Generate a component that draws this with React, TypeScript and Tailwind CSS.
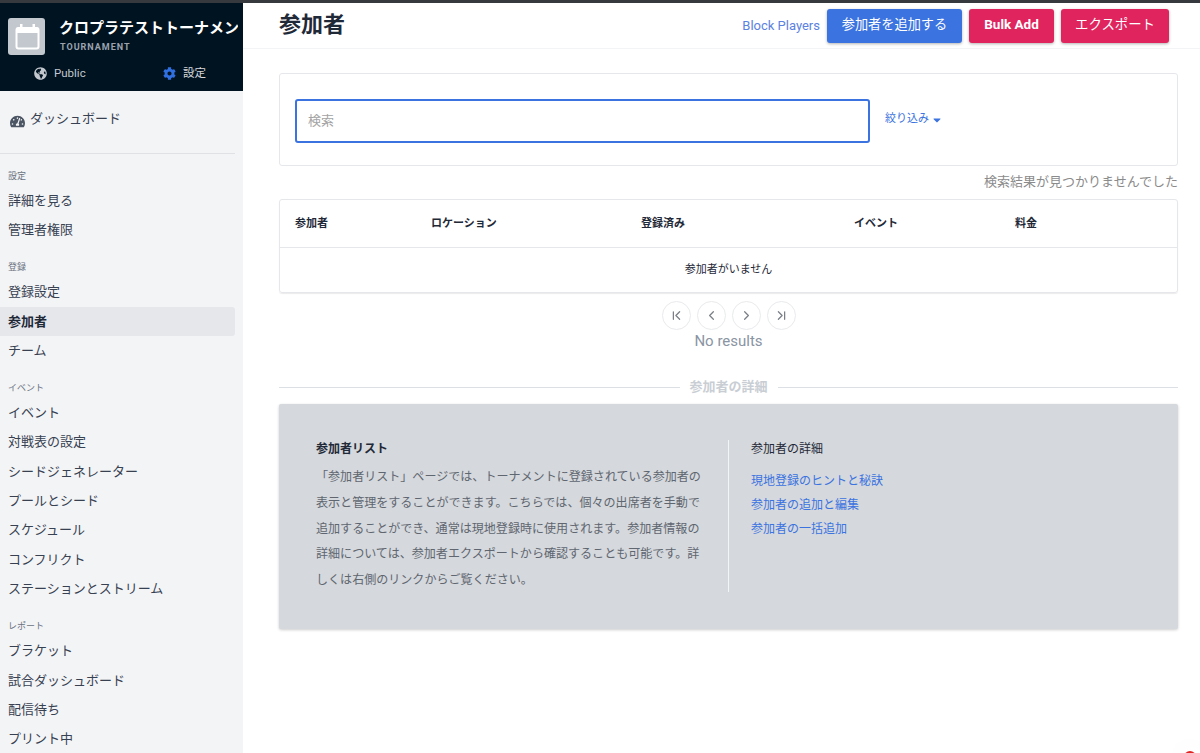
import { ChevronLeft, ChevronRight, ChevronFirst, ChevronLast } from 'lucide-react';
import { FaCog, FaGlobeAmericas, FaTachometerAlt, FaCaretDown } from 'react-icons/fa';

const font = "font-['Roboto','Noto_Sans_CJK_JP',sans-serif]";

const groups = [
  { title: '設定', items: ['詳細を見る', '管理者権限'] },
  { title: '登録', items: ['登録設定', '参加者', 'チーム'] },
  { title: 'イベント', items: ['イベント', '対戦表の設定', 'シードジェネレーター', 'プールとシード', 'スケジュール', 'コンフリクト', 'ステーションとストリーム'] },
  { title: 'レポート', items: ['ブラケット', '試合ダッシュボード', '配信待ち', 'プリント中'] },
];

function CalendarLogo() {
  return <svg width="37" height="37" viewBox="0 0 37 37" className="rounded-[3px]">
    <rect width="37" height="37" fill="#c3c8cf" />
    <rect x="8.5" y="10" width="22" height="20.5" rx="2" fill="#c3c8cf" stroke="#fff" strokeWidth="2" />
    <rect x="8" y="9.5" width="23" height="5.5" rx="1.5" fill="#fff" />
    <rect x="12" y="6" width="2.5" height="6" fill="#fff" />
    <rect x="24.5" y="6" width="2.5" height="6" fill="#fff" />
  </svg>
}

function Sidebar() {
  return <aside className="w-[243px] shrink-0 h-[750px] overflow-hidden bg-[#f3f4f6]">
    <div className="h-[88px] bg-[#001321] pt-[15px] pl-2 pr-[5px]">
      <div className="flex gap-[14px] h-[37px]">
        <div className="w-[37px] h-[37px] shrink-0"><CalendarLogo /></div>
        <div className="min-w-0 overflow-hidden">
          <div className="text-white font-bold text-[15px] leading-[22px] mt-[-1px] whitespace-nowrap">クロプラテストトーナメント</div>
          <div className="text-[#9ca3af] font-bold text-[9px] leading-[11px] tracking-[0.11em] mt-[3px] ml-px">TOURNAMENT</div>
        </div>
      </div>
      <div className="flex text-[11.5px] leading-[18px] mt-[9px] text-[#c3c8cf]">
        <div className="flex items-center gap-[7px] ml-[26px] w-[129px]">
          <FaGlobeAmericas className="text-[13px] text-[#c3c8cf]" />
          <span>Public</span>
        </div>
        <div className="flex items-center gap-[7px]">
          <FaCog className="text-[13px] text-[#2f6fe0]" />
          <span className="text-[#d5d8dc]">設定</span>
        </div>
      </div>
    </div>
    <div className="flex items-center gap-[5px] mt-[18px] pl-[10px] text-[13px] leading-[20px] text-[#374151]">
      <FaTachometerAlt className="text-[15px] text-[#4b5563] mt-[4px]" />
      <span>ダッシュボード</span>
    </div>
    <div className="h-px bg-[#dfe1e4] mt-[24px] w-[235px]" />
    <div className="pt-[16px]">
      {groups.map(group => <div key={group.title} className="mb-[16.5px]">
        <div className="text-[9px] leading-[12px] text-[#6b7280] pl-2 mb-[4px]">{group.title}</div>
        {group.items.map(item => <div
          key={item}
          className={`w-[235px] h-[29.4px] flex items-center pl-2 text-[13px] rounded-r-[3px] ${item === '参加者' ? 'bg-[#e5e7eb] font-bold text-[#1f2937]' : 'text-[#374151]'}`}
        >
          {item}
        </div>)}
      </div>)}
    </div>
  </aside>
}

function Header() {
  return <div className="h-[45px] border-b border-[#f3f4f6] flex items-center pl-[36px] pr-[31px] box-content">
    <h1 className="text-[22px] font-bold text-[#1f2937] leading-[30px] mb-[1px]">参加者</h1>
    <div className="ml-auto flex items-center gap-[7px] mt-[1px]">
      <span className="text-[13px] text-[#5b82e0]">Block Players</span>
      <button className="h-[34px] w-[135px] pb-[2px] rounded-[3px] bg-[#3b73e0] text-white text-[13.2px] shadow-[0_1px_3px_rgba(0,0,0,0.3)]">参加者を追加する</button>
      <button className="h-[34px] w-[85px] pb-[3px] rounded-[3px] bg-[#e0245e] text-white text-[13.5px] font-bold shadow-[0_1px_3px_rgba(0,0,0,0.3)]">Bulk Add</button>
      <button className="h-[34px] w-[108px] pb-[2px] rounded-[3px] bg-[#e0245e] text-white text-[13.4px] shadow-[0_1px_3px_rgba(0,0,0,0.3)]">エクスポート</button>
    </div>
  </div>
}

function Pager() {
  const btn = 'w-[29px] h-[29px] rounded-full border border-[#e9eaec] flex items-center justify-center text-[#7b8088]';
  return <div className="flex justify-center gap-[6px] mt-[8px]">
    <div className={btn}><ChevronFirst size={15} /></div>
    <div className={btn}><ChevronLeft size={15} /></div>
    <div className={btn}><ChevronRight size={15} /></div>
    <div className={btn}><ChevronLast size={15} /></div>
  </div>
}

export default function App() {
  return <div className={`relative w-[1200px] h-[753px] overflow-hidden bg-white ${font}`}>
    <div className="h-[3px] bg-[#36393d]" />
    <div className="flex">
      <Sidebar />
      <main className="flex-1 min-w-0">
        <Header />
        <div className="pl-[36px] pr-[22px] pt-[24px]">
          <div className="h-[93px] border border-[#e5e7eb] rounded-[3px] flex items-center pl-[15px]">
            <input
              className="w-[575px] h-[44px] mt-[2px] border-2 border-[#3b73e0] rounded-[3px] px-[11px] text-[13px] outline-none placeholder:text-[#a3a3a3]"
              placeholder="検索"
            />
            <span className="ml-[15px] text-[11px] text-[#3b73e0]">絞り込み</span>
            <FaCaretDown className="text-[#3b73e0] text-[12px] ml-[2px]" />
          </div>
          <div className="text-right text-[13px] leading-[18px] text-[#8b8b8b] mt-[7px]">検索結果が見つかりませんでした</div>
          <div className="mt-[8px] border border-[#e5e7eb] rounded-[3px] shadow-[0_1px_1px_rgba(0,0,0,0.08)]">
            <div className="h-[48px] pt-[2px] grid grid-cols-[136px_210px_213px_161px_1fr] items-center pl-[15px] text-[11px] font-bold text-[#1f2937] border-b border-[#e5e7eb]">
              <span>参加者</span>
              <span>ロケーション</span>
              <span>登録済み</span>
              <span>イベント</span>
              <span>料金</span>
            </div>
            <div className="h-[44px] flex items-center justify-center text-[11px] text-[#1f2937]">参加者がいません</div>
          </div>
          <Pager />
          <div className="text-center text-[15px] leading-[20px] text-[#8a94a3] mt-[1px]">No results</div>
          <div className="flex items-center gap-[10px] mt-[27px]">
            <div className="flex-1 h-px bg-[#dcdfe3]" />
            <span className="text-[13px] font-bold text-[#c9ced4] leading-[18px]">参加者の詳細</span>
            <div className="flex-1 h-px bg-[#dcdfe3]" />
          </div>
          <div className="mt-[8px] h-[225px] bg-[#d5d8dc] rounded-[2px] shadow-[0_1px_3px_rgba(0,0,0,0.2)] flex pt-[35px] pl-[37px]">
            <div className="w-[386px]">
              <div className="text-[12px] font-bold text-[#1f2937] leading-[20px]">参加者リスト</div>
              <p className="text-[12.05px] leading-[25.8px] text-[#5f6670] mt-[6px]">
                「参加者リスト」ページでは、トーナメントに登録されている参加者の表示と管理をすることができます。こちらでは、個々の出席者を手動で追加することができ、通常は現地登録時に使用されます。参加者情報の詳細については、参加者エクスポートから確認することも可能です。詳しくは右側のリンクからご覧ください。
              </p>
            </div>
            <div className="ml-[26px] mt-[1px] h-[152px] w-px bg-[#f3f4f6]" />
            <div className="ml-[22px]">
              <div className="text-[12px] text-[#1f2937] leading-[20px]">参加者の詳細</div>
              <div className="mt-[10px] text-[12px] leading-[24px] text-[#3b73e0]">
                <div>現地登録のヒントと秘訣</div>
                <div>参加者の追加と編集</div>
                <div>参加者の一括追加</div>
              </div>
            </div>
          </div>
        </div>
      </main>
    </div>
    <div className="absolute left-[1184px] top-[751px] w-[12px] h-[12px] rounded-full bg-[#e02424] shadow-[0_0_40px_rgba(0,0,0,0.12)]" />
  </div>
}
